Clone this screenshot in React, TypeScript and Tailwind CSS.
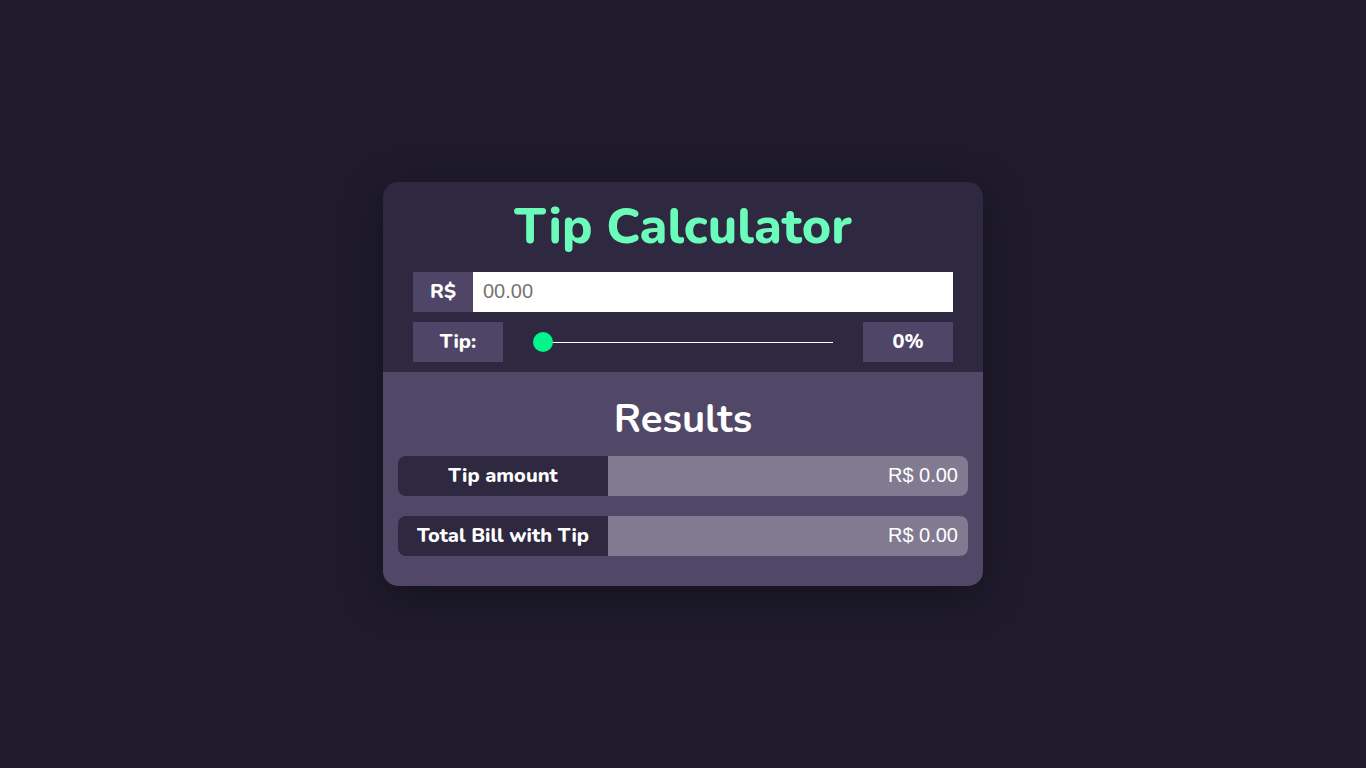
import { useState } from "react";

const rounded = { fontFamily: '"Nunito", Lato, "Noto Sans", sans-serif' };
const plain = { fontFamily: '"Liberation Sans", Arial, sans-serif' };

export default function App() {
  const [bill, setBill] = useState("");
  const [tip, setTip] = useState(0);

  const amount = parseFloat(bill) || 0;
  const tipValue = (amount * tip) / 100;
  const total = amount + tipValue;

  return (
    <div
      className="flex min-h-screen w-full items-center justify-center bg-[#1f1b2d]"
      style={rounded}
    >
      <div className="w-[600px] overflow-hidden rounded-[15px] shadow-[0_10px_40px_rgba(0,0,0,0.35)]">
        <div className="bg-[#2e2940] px-[30px] pt-[12px] pb-[10px]">
          <h1 className="mb-[12px] text-center text-[50px] leading-[66px] font-extrabold text-[#6bfcbc]">
            Tip Calculator
          </h1>

          <div className="flex h-[40px]">
            <span className="flex w-[60px] items-center justify-center bg-[#4f4566] text-[20px] font-extrabold text-white">
              R$
            </span>
            <input
              type="text"
              value={bill}
              onChange={(e) => setBill(e.target.value)}
              placeholder="00.00"
              className="h-full flex-1 bg-white px-[10px] pb-[2px] text-[20px] text-[#333] outline-none placeholder:text-[#757575]"
              style={plain}
            />
          </div>

          <div className="mt-[10px] flex h-[40px] items-center">
            <span className="flex h-full w-[90px] items-center justify-center bg-[#4f4566] text-[20px] font-extrabold text-white">
              Tip:
            </span>
            <input
              type="range"
              min={0}
              max={100}
              value={tip}
              onChange={(e) => setTip(Number(e.target.value))}
              className="mx-[30px] h-px flex-1 cursor-pointer appearance-none bg-white outline-none [&::-webkit-slider-thumb]:h-[20px] [&::-webkit-slider-thumb]:w-[20px] [&::-webkit-slider-thumb]:appearance-none [&::-webkit-slider-thumb]:rounded-full [&::-webkit-slider-thumb]:bg-[#00f58a] [&::-moz-range-thumb]:h-[20px] [&::-moz-range-thumb]:w-[20px] [&::-moz-range-thumb]:rounded-full [&::-moz-range-thumb]:border-0 [&::-moz-range-thumb]:bg-[#00f58a]"
            />
            <span className="flex h-full w-[90px] items-center justify-center bg-[#4f4566] text-[20px] font-extrabold text-white">
              {tip}%
            </span>
          </div>
        </div>

        <div className="bg-[#514868] px-[15px] pt-[19px] pb-[30px]">
          <h2 className="mb-[9px] text-center text-[40px] leading-[56px] font-bold text-white">
            Results
          </h2>

          <div className="flex flex-col gap-[20px]">
            <ResultRow label="Tip amount" value={tipValue} />
            <ResultRow label="Total Bill with Tip" value={total} />
          </div>
        </div>
      </div>
    </div>
  );
}

function ResultRow({ label, value }: { label: string; value: number }) {
  return (
    <div className="flex h-[40px] overflow-hidden rounded-[8px]">
      <span className="flex w-[210px] items-center justify-center bg-[#2e2840] text-[20px] font-extrabold text-white">
        {label}
      </span>
      <span
        className="flex flex-1 items-center justify-end bg-[#817a90] pr-[10px] pb-[2px] text-[20px] text-white"
        style={plain}
      >
        R$ {value.toFixed(2)}
      </span>
    </div>
  );
}
